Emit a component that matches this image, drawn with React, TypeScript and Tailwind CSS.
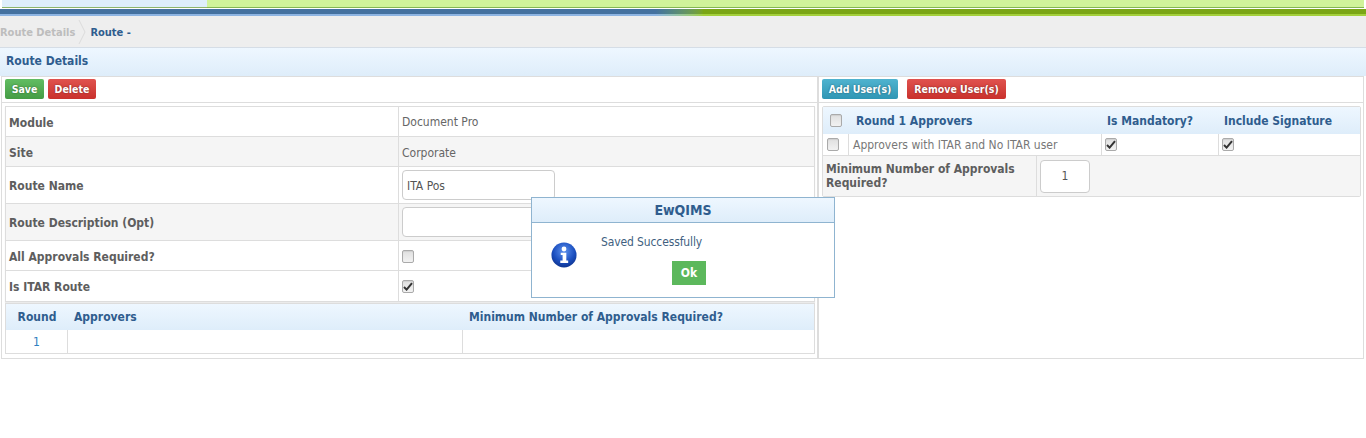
import React from 'react';

const Check = ({ checked = false }: { checked?: boolean }) => (
  <span className="w-[12px] h-[13px] rounded-[2px] border border-[#aaaaaa] bg-gradient-to-b from-[#e0e0e0] to-[#f2f2f2] flex items-center justify-center shadow-[inset_0_1px_1px_rgba(0,0,0,0.08)]">
    {checked && (
      <svg width="10" height="9" viewBox="0 0 10 9">
        <path d="M1 5 L3.6 7.6 L9 1.2" fill="none" stroke="#333" strokeWidth="2" />
      </svg>
    )}
  </span>
);

const Btn = ({ color, w, children }: { color: string; w: string; children: React.ReactNode }) => (
  <button className={`${color} ${w} h-[20px] rounded-[2px] text-white text-[10.5px] font-bold flex items-center justify-center pt-[2px] [text-shadow:0_0_2px_rgba(0,0,0,0.45)]`}>
    {children}
  </button>
);

const Row = ({ label, h, gray, last, tall, children }: { label: string; h: string; gray?: boolean; last?: boolean; tall?: boolean; children: React.ReactNode }) => (
  <div className={`flex ${h} ${gray ? 'bg-[#f5f5f5]' : 'bg-white'} ${last ? '' : 'border-b border-[#dddddd]'}`}>
    <div className={`w-[393px] border-r border-[#dddddd] pl-[3px] ${tall || last ? 'pt-[1px]' : 'pt-[2px]'} flex items-center text-[12px] font-bold text-[#5e5e5e]`}>{label}</div>
    <div className="flex-1 pl-[3px] flex items-center text-[12px] text-[#666666]">{children}</div>
  </div>
);

const TextBox = ({ value = '' }: { value?: string }) => (
  <div className="w-[153px] h-[30px] bg-white border border-[#cccccc] rounded-[4px] pl-[4px] pt-[1px] flex items-center text-[12px] text-[#555555]">
    {value}
  </div>
);

const InfoIcon = () => (
  <svg width="26" height="26" viewBox="0 0 28 28" className="shrink-0">
    <defs>
      <radialGradient id="infoBlue" cx="50%" cy="35%" r="70%">
        <stop offset="0%" stopColor="#5f93ee" />
        <stop offset="60%" stopColor="#1b4fc0" />
        <stop offset="100%" stopColor="#0c2f86" />
      </radialGradient>
    </defs>
    <circle cx="14" cy="14" r="13.5" fill="url(#infoBlue)" />
    <circle cx="14" cy="7.5" r="2.6" fill="#fff" />
    <path d="M10.5 11.5 H16.5 V20 H18.5 V22.5 H10 V20 H12.5 V14 H10.5 Z" fill="#fff" />
  </svg>
);

export default function App() {
  return (
    <div className="relative w-[1366px] h-[438px] bg-white overflow-hidden font-['DejaVu_Sans_Condensed','DejaVu_Sans',sans-serif]">

      {/* top nav remnant */}
      <div className="h-[8px] px-[2px] flex">
        <div className="w-[205px] bg-[#deeefb] border-b border-[#8fb56a]" />
        <div className="flex-1 bg-[#d0f39a] border-b border-[#84b653]" />
      </div>
      <div className="h-[1px] bg-white" />
      <div className="h-[5px] bg-gradient-to-r from-[#44719f] from-[48%] to-[#7aa515] to-[51.5%]" />
      <div className="h-[2px] bg-gradient-to-r from-[#8db4e2] from-[48%] to-[#a3cf3b] to-[51.5%]" />

      {/* breadcrumb */}
      <div className="h-[32px] bg-[#eeeeee] border-b border-[#d5dde6] flex items-center text-[11px] font-bold">
        <span className="text-[#bdbdbd] pt-[3px]">Route Details</span>
        <svg width="10" height="28" viewBox="0 0 10 28" className="ml-[3px] mr-[2px]">
          <path d="M1 2 L7 14 L1 26" fill="none" stroke="#dcdcdc" />
        </svg>
        <span className="text-[#2f5d8e] pt-[3px]">Route -</span>
      </div>

      {/* title bar */}
      <div className="h-[28px] bg-gradient-to-b from-[#eef7ff] to-[#deedfa] pl-[6px] pb-[2px] flex items-center text-[12px] font-bold text-[#2f5d8e]">
        Route Details
      </div>

      {/* panels */}
      <div className="flex px-[1px]">

        {/* left */}
        <div className="w-[817px] h-[283px] border border-[#dddddd] px-[3px]">
          <div className="h-[26px] flex items-center gap-[4px] border-b border-[#dddddd] -mx-[3px] px-[3px] pb-[1px]">
            <Btn color="bg-gradient-to-b from-[#62bd62] to-[#459c45]" w="w-[39px]">Save</Btn>
            <Btn color="bg-gradient-to-b from-[#e0524e] to-[#c9302c]" w="w-[48px]">Delete</Btn>
          </div>

          <div className="mt-[3px] w-[810px] border border-[#dddddd] shadow-[0_1px_1px_rgba(0,0,0,0.08)]">
            <Row label="Module" h="h-[30px]">Document Pro</Row>
            <Row label="Site" h="h-[30px]" gray><span className="pt-[2px]">Corporate</span></Row>
            <Row label="Route Name" h="h-[37px]" tall><TextBox value="ITA Pos" /></Row>
            <Row label="Route Description (Opt)" h="h-[37px]" gray tall><TextBox /></Row>
            <Row label="All Approvals Required?" h="h-[30px]"><div className="mt-[1px]"><Check /></div></Row>
            <Row label="Is ITAR Route" h="h-[30px]" last><div className="mt-[1px]"><Check checked /></div></Row>
          </div>

          <div className="mt-[1px] w-[810px] border border-[#dddddd]">
            <div className="h-[26px] bg-gradient-to-b from-[#eef7ff] to-[#deedfa] flex items-center text-[12px] font-bold text-[#2f5d8e]">
              <div className="w-[62px] text-center">Round</div>
              <div className="w-[395px] pl-[6px]">Approvers</div>
              <div className="flex-1 pl-[6px]">Minimum Number of Approvals Required?</div>
            </div>
            <div className="h-[23px] flex text-[12px] text-[#2f7fc0]">
              <div className="w-[62px] border-r border-[#dddddd] flex items-center justify-center">1</div>
              <div className="w-[395px] border-r border-[#dddddd]" />
              <div className="flex-1" />
            </div>
          </div>
        </div>

        {/* right */}
        <div className="w-[546px] h-[283px] border border-l-0 border-[#dddddd]">
          <div className="h-[26px] flex items-center pl-[3px] pb-[1px] border-b border-l border-[#dddddd]">
            <Btn color="bg-gradient-to-b from-[#4fb3cf] to-[#2f96b4] mr-[9px]" w="w-[76px]">Add User(s)</Btn>
            <Btn color="bg-gradient-to-b from-[#e0524e] to-[#c9302c]" w="w-[99px]">Remove User(s)</Btn>
          </div>
          <div className="border-l border-[#dddddd] h-[256px] pl-[3px] pt-[3px]">
            <div className="w-[539px] border border-[#dddddd] rounded-[2px]">
              <div className="h-[27px] bg-gradient-to-b from-[#eef7ff] to-[#deedfa] flex items-center text-[12px] font-bold text-[#2f5d8e]">
                <div className="w-[26px] flex justify-center"><Check /></div>
                <div className="w-[252px] pl-[7px]">Round 1 Approvers</div>
                <div className="w-[117px] pl-[6px]">Is Mandatory?</div>
                <div className="flex-1 pl-[6px]">Include Signature</div>
              </div>
              <div className="h-[22px] flex items-center text-[12px] text-[#777777] border-b border-[#dddddd]">
                <div className="w-[26px] h-full border-r border-[#dddddd] pl-[4px] flex items-center"><Check /></div>
                <div className="w-[253px] h-full border-r border-[#dddddd] pl-[4px] pt-[1px] flex items-center">Approvers with ITAR and No ITAR user</div>
                <div className="w-[117px] h-full border-r border-[#dddddd] pl-[3px] flex items-center"><Check checked /></div>
                <div className="flex-1 pl-[3px] flex items-center"><Check checked /></div>
              </div>
              <div className="h-[40px] bg-[#f5f5f5] flex">
                <div className="w-[214px] border-r border-[#dddddd] pl-[3px] flex items-center text-[12px] leading-[14px] font-bold text-[#5e5e5e]">
                  Minimum Number of Approvals Required?
                </div>
                <div className="pl-[3px] flex items-center">
                  <div className="w-[50px] h-[33px] bg-white border border-[#cccccc] rounded-[4px] flex items-center justify-center text-[12px] text-[#555555]">1</div>
                </div>
              </div>
            </div>
          </div>
        </div>
      </div>

      {/* dialog */}
      <div className="absolute left-[531px] top-[197px] w-[304px] h-[101px] bg-white border border-[#8fb4d0]">
        <div className="h-[25px] bg-gradient-to-b from-[#eef7ff] to-[#deedfa] border-b border-[#8fb4d0] flex items-center justify-center text-[14px] font-bold text-[#2f5d8e]">
          EwQIMS
        </div>
        <div className="flex pl-[19px] pt-[19px]">
          <InfoIcon />
          <div className="ml-[24px] -mt-[9px]">
            <div className="text-[12px] leading-[18px] text-[#3f5f7f] tracking-[-0.12px]">Saved Successfully</div>
            <button className="block ml-[71px] mt-[10px] w-[34px] h-[24px] bg-[#5cb85c] text-white text-[12px] font-bold">Ok</button>
          </div>
        </div>
      </div>
    </div>
  );
}
